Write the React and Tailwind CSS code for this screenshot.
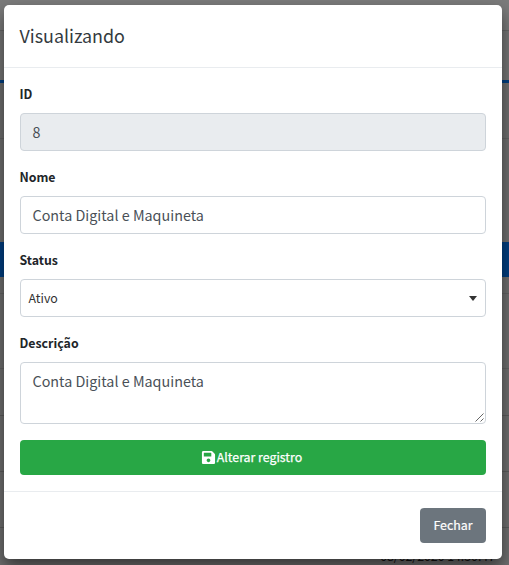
import { FaSave } from "react-icons/fa";

const label = "-ml-[0.5px] h-[19px] text-[12.35px] leading-[19px] font-bold text-[#212529]";
const field = "w-full rounded border border-[#ced4da] text-[#495057]";

// Page rows behind the dialog
function Backdrop() {
  return (
    <div className="flex h-[565px] w-full flex-col bg-[#6f6f6f]">
      <div className="h-[31px] shrink-0 border-b border-[#666] bg-[#7b7b7b]" />
      <div className="h-[49px] shrink-0 bg-[#757575]" />
      <div className="h-[3px] shrink-0 bg-[#003e80]" />
      <div className="h-[56px] shrink-0 border-b border-[#636363]" />
      <div className="h-[103px] shrink-0" />
      <div className="h-[35px] shrink-0 bg-[#003e80]" />
      <div className="h-[17px] shrink-0 border-b border-[#636363]" />
      <div className="h-[75px] shrink-0 border-b border-[#636363]" />
      <div className="h-[47px] shrink-0 border-b border-[#5c5c5c]" />
      <div className="h-[56px] shrink-0 border-b border-[#5c5c5c]" />
      <div className="h-[56px] shrink-0 border-b border-[#5c5c5c]" />
      <div className="flex flex-1 items-end justify-end pr-[14px] text-[12.3px] leading-[18px] text-[#111]">
        <span>08/02/2020 14:30:47</span>
      </div>
    </div>
  );
}

export default function App() {
  return (
    <div className="relative h-[565px] w-full overflow-hidden font-['Noto_Sans_CJK_SC','Noto_Sans',sans-serif]">
      <Backdrop />
      <div className="absolute top-[5px] left-[4px] flex h-[554px] w-[498px] flex-col rounded-[5px] bg-white shadow-[0_8px_16px_rgba(0,0,0,0.5)]">
        <header className="flex h-[63px] shrink-0 items-center border-b border-[#e9ecef] px-[15.5px] pb-[2px]">
          <h5 className="text-[17.9px] leading-[30px] text-[#343a40]">Visualizando</h5>
        </header>
        <main className="flex flex-col px-4 pt-[17px]">
          <div className={label}>ID</div>
          <div className={`${field} mt-[9px] flex h-[38px] items-center bg-[#e9ecef] px-[11.5px] text-[14.35px]`}>8</div>
          <div className={`${label} mt-[17px]`}>Nome</div>
          <div className={`${field} mt-[9px] flex h-[38px] items-center px-[11.5px] text-[14.35px]`}>Conta Digital e Maquineta</div>
          <div className={`${label} mt-[17px]`}>Status</div>
          <div className={`${field} mt-[9px] flex h-[38px] items-center justify-between pr-2 pl-[7.5px] text-[12.4px] !text-[#333]`}>
            <span>Ativo</span>
            <svg className="h-[5px] w-[8px]" viewBox="0 0 8 5" fill="#333"><path d="M0 0h8L4 5z" /></svg>
          </div>
          <div className={`${label} mt-[17px]`}>Descrição</div>
          <div className={`${field} mt-[9px] flex h-[62px] justify-between pt-[6px] pl-[11.5px] text-[14.35px] leading-[24px]`}>
            <span>Conta Digital e Maquineta</span>
            <svg className="mr-px mb-px h-[9px] w-[9px] self-end" viewBox="0 0 9 9" stroke="#555" strokeWidth="0.9"><path d="M0.5 8.5l8-8M5.5 8.5l3-3" /></svg>
          </div>
          <button className="mt-4 flex h-[35px] items-center justify-center gap-[1px] rounded bg-[#28a745] pr-[3px] text-[12.35px] font-normal text-white [-webkit-text-stroke:0.25px_white]">
            <FaSave size={15} className="mb-px" />
            <span>Alterar registro</span>
          </button>
        </main>
        <footer className="mt-4 flex flex-1 items-start justify-end border-t border-[#e9ecef] px-4 pt-4">
          <button className="h-[35px] w-[66px] rounded bg-[#6c757d] text-[12.4px] font-normal text-white [-webkit-text-stroke:0.2px_white]">Fechar</button>
        </footer>
      </div>
    </div>
  );
}
